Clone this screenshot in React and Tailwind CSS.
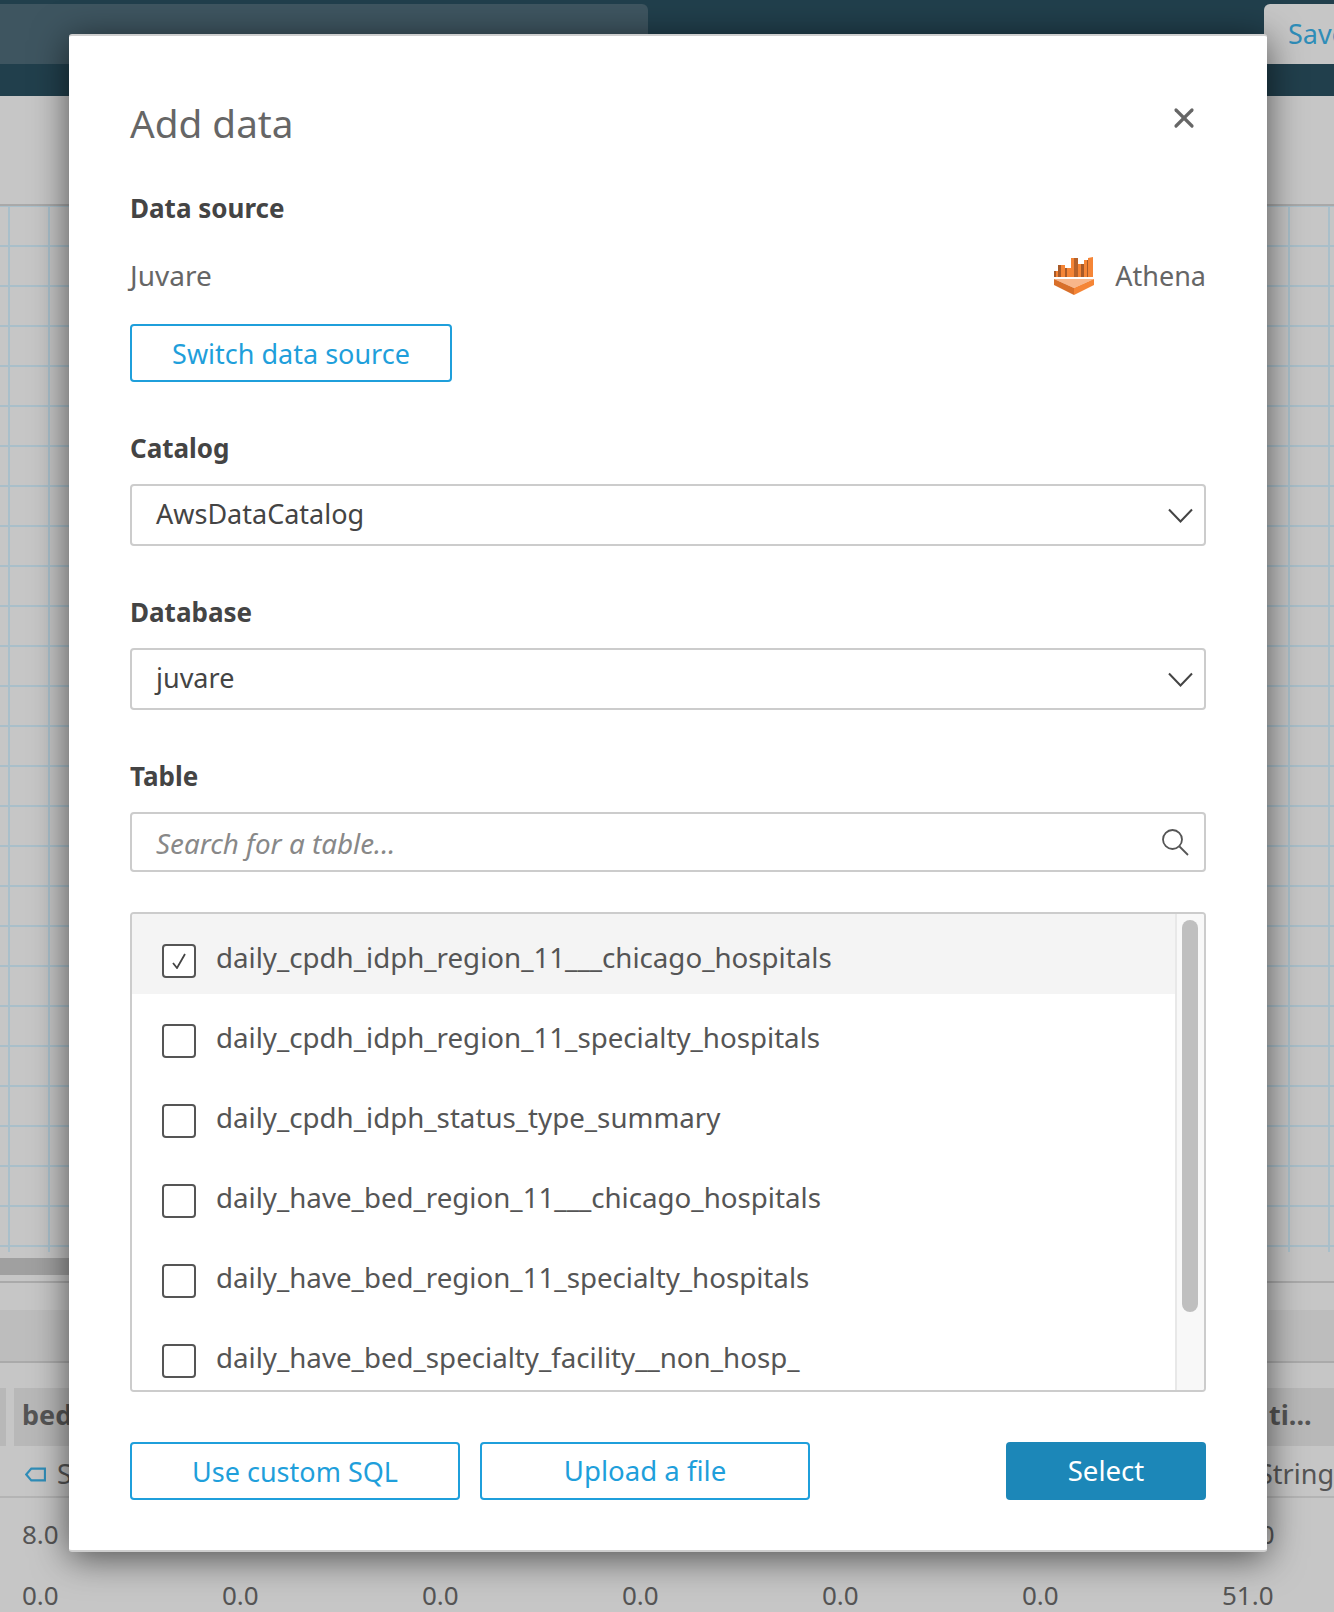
import { X } from "lucide-react";

const tables = [
  "daily_cpdh_idph_region_11___chicago_hospitals",
  "daily_cpdh_idph_region_11_specialty_hospitals",
  "daily_cpdh_idph_status_type_summary",
  "daily_have_bed_region_11___chicago_hospitals",
  "daily_have_bed_region_11_specialty_hospitals",
  "daily_have_bed_specialty_facility__non_hosp_",
];

const lastRow = ["0.0", "0.0", "0.0", "0.0", "0.0", "0.0", "51.0"];

function AthenaIcon() {
  return (
    <svg width="40" height="38" viewBox="0 0 40 38">
      <path d="M0 14h2v6H0z" fill="#a85a28" />
      <path d="M2 14h2v6H2z" fill="#f58536" />
      <path d="M4 8h3v12H4z" fill="#a85a28" />
      <path d="M7 8h4v12H7z" fill="#f58536" />
      <path d="M11 11h2v9h-2z" fill="#a85a28" />
      <path d="M13 11h4v9h-4z" fill="#f58536" />
      <path d="M17 1h3v19h-3z" fill="#f58536" />
      <path d="M20 1h4v19h-4z" fill="#b5622b" />
      <path d="M24 7h3v13h-3z" fill="#f58536" />
      <path d="M27 7h3v13h-3z" fill="#a85a28" />
      <path d="M30 3h3v17h-3z" fill="#f58536" />
      <path d="M33 3l1 0v17h-1z" fill="#a85a28" />
      <path d="M34 1l5-1v20h-5z" fill="#f58536" />
      <path d="M0 22h40l-20 9z" fill="#f8b68a" />
      <path d="M0 22v6l20 10V31z" fill="#d86f2a" />
      <path d="M40 22v6L20 38V31z" fill="#f58536" />
    </svg>
  );
}

function OutlineButton({ children, className }) {
  return (
    <button className={"h-[58px] border-2 border-[#1f9fdb] rounded-[4px] bg-white text-[#1f9fdb] leading-none " + className}>
      {children}
    </button>
  );
}

function FieldLabel({ children, className }) {
  return <div className={"h-8 text-[26px] leading-8 font-bold text-[#444444] " + className}>{children}</div>;
}

function SelectBox({ value, className }) {
  return (
    <div className={"flex items-center justify-between pl-[24px] pr-[11px] border-2 border-[#cccccc] rounded-[4px] text-[27px] text-[#444444] " + className}>
      <span className="pb-[2px]">{value}</span>
      <svg width="25" height="15" viewBox="0 0 25 15" fill="none" stroke="#444444" strokeWidth="2">
        <path d="M1 1.5l11.5 12L24 1.5" />
      </svg>
    </div>
  );
}

function TableRow({ name, checked }) {
  return (
    <div className={"h-[80px] shrink-0 flex items-start pl-[30px] gap-5 " + (checked ? "bg-[#f4f4f4]" : "bg-white")}>
      <div className="w-[34px] h-[34px] mt-[30px] border-2 border-[#555555] rounded-[4px] flex items-center justify-center bg-white">
        {checked && (
          <svg width="14" height="16" viewBox="0 0 14 16" fill="none" stroke="#444444" strokeWidth="1.8">
            <path d="M1 10l4 5 8-14" />
          </svg>
        )}
      </div>
      <span className="mt-[27px] text-[27.7px] leading-8 text-[#555555]">{name}</span>
    </div>
  );
}

function Modal() {
  return (
    <div className="absolute left-[69px] top-[34px] w-[1198px] h-[1518px] bg-white rounded-[3px] border-t-2 border-b-2 border-[#cfcfcf] shadow-[0_6px_36px_rgba(0,0,0,0.6)] px-[61px] pt-[63px]">
      <button className="absolute right-[67px] top-[66px] text-[#666666]">
        <X size={32} strokeWidth={2.4} />
      </button>
      <h1 className="h-12 text-[38.7px] leading-[48px] text-[#666666]">Add data</h1>

      <FieldLabel className="mt-[45px]">Data source</FieldLabel>
      <div className="mt-9 h-8 flex items-center justify-between text-[27px] leading-8 text-[#666666]">
        <span className="pb-[2px] text-[28px]">Juvare</span>
        <div className="flex items-center gap-[21px]">
          <AthenaIcon />
          <span>Athena</span>
        </div>
      </div>
      <OutlineButton className="mt-8 w-[322px] block text-[27px]">Switch data source</OutlineButton>

      <FieldLabel className="mt-[50px]">Catalog</FieldLabel>
      <SelectBox value="AwsDataCatalog" className="mt-5 h-[62px]" />

      <FieldLabel className="mt-[50px]">Database</FieldLabel>
      <SelectBox value="juvare" className="mt-5 h-[62px]" />

      <FieldLabel className="mt-[50px]">Table</FieldLabel>
      <div className="mt-5 h-[60px] flex items-center justify-between pl-[24px] pr-[15px] border-2 border-[#cccccc] rounded-[4px]">
        <span className="pt-[3px] text-[27.8px] italic text-[#888888]">Search for a table...</span>
        <svg width="27" height="27" viewBox="0 0 27 27" fill="none" stroke="#555555" strokeWidth="1.8">
          <circle cx="10.5" cy="10.5" r="9.5" />
          <path d="M17.5 17.5l8.5 8.5" />
        </svg>
      </div>

      <div className="mt-10 h-[480px] flex border-2 border-[#cccccc] rounded-[4px] overflow-hidden">
        <div className="flex-1 flex flex-col overflow-hidden">
          {tables.map((t, i) => (
            <TableRow key={t} name={t} checked={i === 0} />
          ))}
        </div>
        <div className="w-[29px] bg-[#f8f8f8] border-l-2 border-[#e8e8e8] pt-[6px] pl-[5px]">
          <div className="w-4 h-[392px] rounded-lg bg-[#bfbfbf]" />
        </div>
      </div>

      <div className="mt-[50px] flex">
        <OutlineButton className="w-[330px] text-[27px]">Use custom SQL</OutlineButton>
        <OutlineButton className="w-[330px] ml-5 text-[27.6px]">Upload a file</OutlineButton>
        <button className="ml-auto w-[200px] h-[58px] rounded-[4px] bg-[#1c87b8] text-white text-[27.6px] leading-none">Select</button>
      </div>
    </div>
  );
}

export default function App() {
  return (
    <div className="relative w-[1334px] h-[1612px] overflow-hidden bg-[#c6c6c6] font-['Noto_Sans',sans-serif] text-[#555555]">
      {/* top bar */}
      <div className="h-[96px] bg-[#213f4c] pt-1 flex justify-between">
        <div className="w-[648px] h-[60px] rounded-tr-md bg-[#3e5560]" />
        <div className="w-[70px] h-[60px] rounded-tl-md bg-[#c6c6c6] pl-[24px] text-[27px] leading-[60px] text-[#2f8db8] overflow-hidden">Save</div>
      </div>

      <div className="h-[108px]" />

      {/* sheet grid */}
      <div className="h-[1048px] border-t-2 border-[#a9a9a9] bg-[linear-gradient(to_right,#a9bfca_2px,transparent_2px),linear-gradient(to_bottom,#a9bfca_2px,transparent_2px)] bg-[size:40px_40px] bg-[position:8px_-1px]" />

      {/* horizontal scrollbar */}
      <div className="mt-[6px] h-[17px] w-[700px] bg-[#a0a0a0]" />
      <div className="mt-[6px] h-[2px] bg-[#aaaaaa]" />
      <div className="mt-[27px] h-[51px] bg-[#bdbdbd]" />
      <div className="h-[2px] bg-[#aaaaaa]" />

      {/* data preview table */}
      <div className="mt-[25px]">
        <div className="h-[58px] flex items-center text-[27px] font-bold">
          <div className="w-[6px] h-full bg-[#b8b8b8]" />
          <div className="ml-[8px] flex-1 h-full pl-2 pb-1 flex items-center bg-[#b8b8b8]">
            <span className="w-[1247px]">bed</span>
            <span>ti...</span>
          </div>
        </div>
        <div className="h-[52px] pt-[6px] border-b-2 border-[#b4b4b4] flex pl-[25px] items-center text-[27px]">
          <svg width="25" height="17" viewBox="0 0 25 17" fill="none" stroke="#2f8db8" strokeWidth="2.5" className="mr-[11px]">
            <path d="M23.7 1.5H7.5L1.5 8.5l6 7h16.2z" />
          </svg>
          <span className="w-[1201px] shrink-0">String</span>
          <span>String</span>
        </div>
        <div className="h-[72px] flex pl-[22px] items-center text-[26px]">
          <span className="w-[1201px] shrink-0">8.0</span>
          <span>10.0</span>
        </div>
        <div className="mt-[6px] pl-[22px] flex text-[26px]">
          {lastRow.map((v, i) => (
            <span key={i} className="w-[200px] shrink-0">{v}</span>
          ))}
        </div>
      </div>

      <Modal />
    </div>
  );
}
